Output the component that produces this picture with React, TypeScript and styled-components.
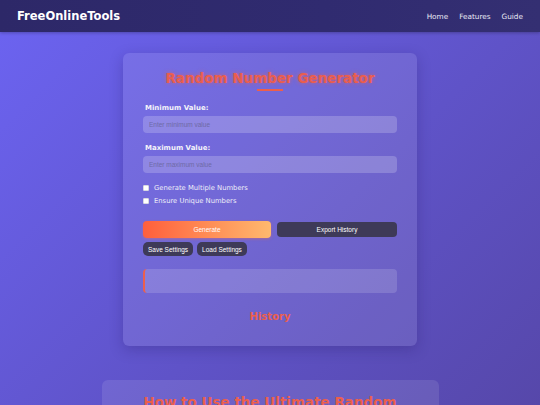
import React from 'react'
import styled, { createGlobalStyle } from 'styled-components'

const GlobalStyle = createGlobalStyle`
  html, body {
    margin: 0;
    padding: 0;
  }
  body {
    font-family: "DejaVu Sans", Verdana, sans-serif;
    background: linear-gradient(135deg, #6c64f2 0%, #5f53c8 55%, #5546a6 100%);
    min-height: 405px;
    overflow: hidden;
    color: #fff;
  }
`

function App() {
  return (
    <>
      <GlobalStyle />
      <Header>
        <Logo>FreeOnlineTools</Logo>
        <Nav>
          <NavLink>Home</NavLink>
          <NavLink>Features</NavLink>
          <NavLink>Guide</NavLink>
        </Nav>
      </Header>
      <Main>
        <Card>
          <Title>Random Number Generator</Title>
          <Underline />
          <Field>
            <Label>Minimum Value:</Label>
            <Input placeholder="Enter minimum value" />
          </Field>
          <Field>
            <Label>Maximum Value:</Label>
            <Input placeholder="Enter maximum value" />
          </Field>
          <Checks>
            <CheckRow>
              <Box type="checkbox" />
              Generate Multiple Numbers
            </CheckRow>
            <CheckRow>
              <Box type="checkbox" />
              Ensure Unique Numbers
            </CheckRow>
          </Checks>
          <ButtonRow>
            <GenerateButton>Generate</GenerateButton>
            <DarkButton>Export History</DarkButton>
          </ButtonRow>
          <SmallRow>
            <SmallButton>Save Settings</SmallButton>
            <SmallButton>Load Settings</SmallButton>
          </SmallRow>
          <Result />
          <SubTitle>History</SubTitle>
        </Card>
        <GuideCard>
          <GuideTitle>How to Use the Ultimate Random</GuideTitle>
        </GuideCard>
      </Main>
    </>
  )
}

const Header = styled.header`
  height: 32px;
  background: linear-gradient(90deg, #2d2868 0%, #302b70 60%, #342f72 100%);
  display: flex;
  align-items: center;
  justify-content: space-between;
  padding: 0 17px;
  box-shadow: 0 1px 3px rgba(0, 0, 0, 0.25);
`
const Logo = styled.div`
  font-weight: bold;
  font-size: 11.5px;
  color: #fff;
`
const Nav = styled.nav`
  display: flex;
  gap: 11px;
`
const NavLink = styled.a`
  font-size: 7.3px;
  color: #e8e8f4;
`
const Main = styled.main`
  display: flex;
  flex-direction: column;
  align-items: center;
  padding-top: 21px;
`
const Card = styled.section`
  width: 294px;
  box-sizing: border-box;
  padding: 17px 20px 23px;
  background: rgba(255, 255, 255, 0.1);
  border-radius: 6px;
  box-shadow: 0 4px 14px rgba(30, 20, 90, 0.25);
  display: flex;
  flex-direction: column;
`
const Title = styled.h1`
  margin: 0;
  text-align: center;
  font-size: 13.5px;
  line-height: 16px;
  color: #ea5e4e;
  text-shadow: 0 0 4px rgba(236, 95, 76, 0.7);
`
const Underline = styled.div`
  width: 26px;
  height: 2px;
  background: #ec5f4c;
  align-self: center;
  margin: 3px 0 13px;
`
const Field = styled.div`
  display: flex;
  flex-direction: column;
  margin-bottom: 11px;
`
const Label = styled.label`
  font-weight: bold;
  font-size: 7px;
  line-height: 8px;
  color: #f4f4fa;
  margin: 0 0 4px 2px;
`
const Input = styled.input`
  height: 17px;
  box-sizing: border-box;
  border: none;
  border-radius: 4px;
  background: rgba(255, 255, 255, 0.2);
  padding: 0 6px;
  font-family: "Liberation Sans", Arial, sans-serif;
  font-size: 6.5px;
  outline: none;
  &::placeholder {
    color: #6e6aa6;
  }
`
const Checks = styled.div`
  display: flex;
  flex-direction: column;
  gap: 5px;
`
const CheckRow = styled.label`
  display: flex;
  align-items: center;
  gap: 5px;
  font-size: 6.8px;
  line-height: 8px;
  color: #eeeef8;
`
const Box = styled.input`
  appearance: none;
  width: 6px;
  height: 6px;
  margin: 0;
  background: #fff;
  border: 1px solid #d8d8e0;
  border-radius: 1px;
`
const ButtonRow = styled.div`
  display: grid;
  grid-template-columns: 128px 1fr;
  gap: 6px;
  margin-top: 16px;
  align-items: center;
`
const GenerateButton = styled.button`
  height: 17px;
  border: none;
  border-radius: 4px;
  background: linear-gradient(90deg, #ff5f3c 0%, #ffb96e 100%);
  box-shadow: 0 1px 3px rgba(255, 110, 70, 0.4);
  color: #fff;
  font-family: "Liberation Sans", Arial, sans-serif;
  font-size: 6.5px;
`
const DarkButton = styled.button`
  height: 15px;
  border: none;
  border-radius: 4px;
  background: #3e3a58;
  color: #fff;
  font-family: "Liberation Sans", Arial, sans-serif;
  font-size: 6.5px;
`
const SmallRow = styled.div`
  display: flex;
  gap: 4px;
  margin-top: 4px;
`
const SmallButton = styled(DarkButton)`
  height: 14px;
  padding: 0 5px;
  border-radius: 5px;
`
const Result = styled.div`
  height: 24px;
  margin-top: 13px;
  border-radius: 4px;
  border-left: 2px solid #ec5f4c;
  background: rgba(255, 255, 255, 0.15);
`
const SubTitle = styled.h2`
  margin: 18px 0 0;
  text-align: center;
  font-size: 10px;
  line-height: 12px;
  color: #ec5f4c;
`
const GuideCard = styled.section`
  width: 337px;
  margin-top: 34px;
  padding-top: 14px;
  height: 60px;
  background: rgba(255, 255, 255, 0.1);
  border-radius: 6px;
  display: flex;
  justify-content: center;
`
const GuideTitle = styled.h2`
  margin: 0;
  font-size: 13.5px;
  color: #ec5f4c;
`

export default App
